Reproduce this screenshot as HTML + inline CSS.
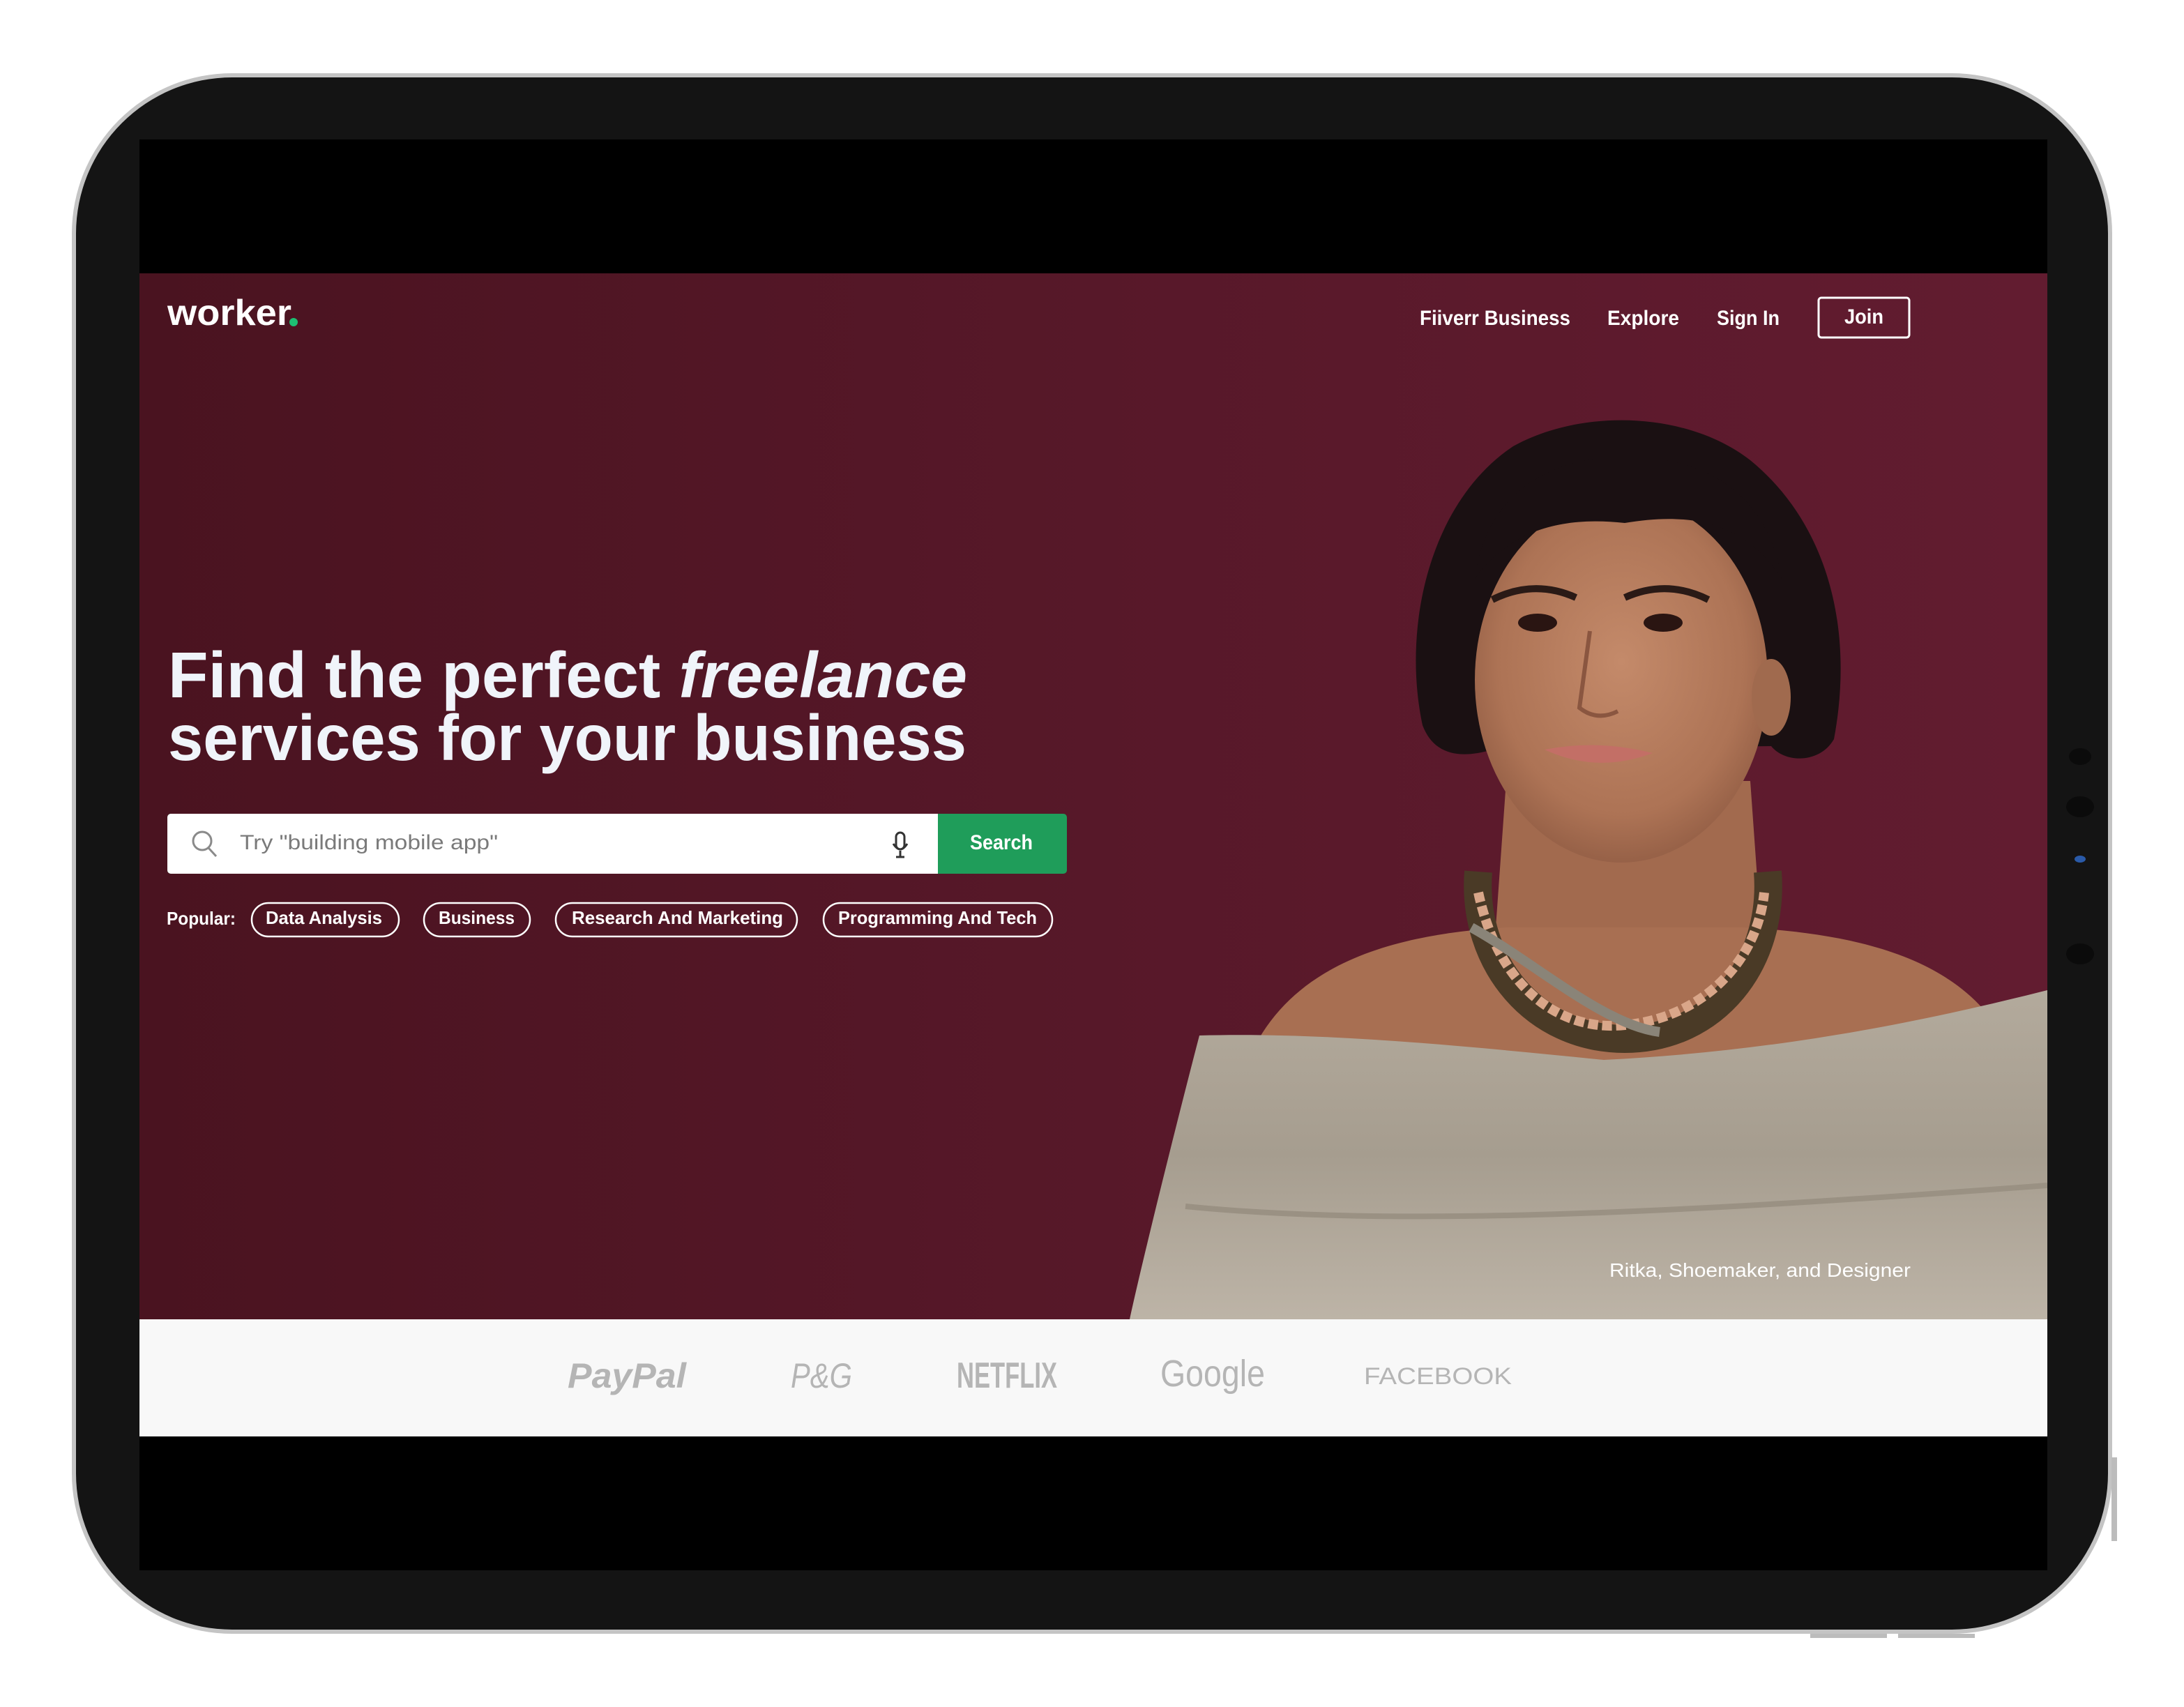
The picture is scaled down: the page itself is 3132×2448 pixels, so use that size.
<!DOCTYPE html>
<html><head><meta charset="utf-8"><style>
html,body{margin:0;padding:0;background:#fff;width:3132px;height:2448px;overflow:hidden}
svg{display:block}
text{font-family:"Liberation Sans",sans-serif}
</style></head><body>
<svg width="3132" height="2448" viewBox="0 0 3132 2448" xmlns="http://www.w3.org/2000/svg">
<defs>
<linearGradient id="hero" x1="0" x2="1" y1="0" y2="0">
<stop offset="0" stop-color="#4a1320"/><stop offset="0.5" stop-color="#571829"/><stop offset="1" stop-color="#621c30"/>
</linearGradient>
<radialGradient id="face" cx="0.5" cy="0.45" r="0.6">
<stop offset="0" stop-color="#c48a6a"/><stop offset="0.7" stop-color="#ad7355"/><stop offset="1" stop-color="#8e5a42"/>
</radialGradient>
<linearGradient id="blouse" x1="0" x2="0" y1="0" y2="1">
<stop offset="0" stop-color="#b3aa9c"/><stop offset="0.5" stop-color="#a69d8f"/><stop offset="1" stop-color="#bdb4a7"/>
</linearGradient>
<clipPath id="scr"><rect x="200" y="392" width="2736" height="1500"/></clipPath>
</defs>
<rect x="103" y="105" width="2926" height="2238" rx="230" fill="#c4c4c4"/>
<rect x="109" y="111" width="2914" height="2226" rx="224" fill="#141414"/>
<rect x="3028" y="2090" width="8" height="120" fill="#bcbcbc"/>
<rect x="2596" y="2343" width="110" height="6" fill="#bcbcbc"/>
<rect x="2722" y="2343" width="110" height="6" fill="#bcbcbc"/>
<ellipse cx="2983" cy="1085" rx="16" ry="12" fill="#0b0b0b"/>
<ellipse cx="2983" cy="1157" rx="20" ry="15" fill="#0b0b0b"/>
<ellipse cx="2983" cy="1232" rx="8" ry="5" fill="#2a5aa8"/>
<ellipse cx="2983" cy="1368" rx="20" ry="15" fill="#0b0b0b"/>
<rect x="200" y="200" width="2736" height="2052" fill="#000"/>
<rect x="200" y="392" width="2736" height="1500" fill="url(#hero)"/>
<g clip-path="url(#scr)">
 <path d="M2040 1040 C2010 900 2050 720 2170 640 C2270 585 2420 590 2510 660 C2620 750 2660 900 2630 1060 C2610 1095 2560 1095 2540 1070 L2140 1075 C2090 1090 2055 1080 2040 1040Z" fill="#1a1012"/>
 <path d="M2160 1120 L2510 1120 L2530 1400 L2140 1400Z" fill="#a26a4e"/>
 <path d="M1790 1520 C1850 1380 2000 1340 2160 1330 L2500 1330 C2680 1340 2820 1380 2880 1500 L2880 1560 L1790 1580Z" fill="#a86f52"/>
 <ellipse cx="2325" cy="975" rx="210" ry="262" fill="url(#face)"/>
 <ellipse cx="2540" cy="1000" rx="28" ry="55" fill="#a06a4e"/>
 <path d="M2115 830 C2130 710 2220 655 2330 655 C2450 655 2535 710 2555 830 C2500 745 2420 735 2330 750 C2240 740 2165 760 2115 830Z" fill="#1a1012"/>
 <path d="M2140 860 Q2200 830 2260 857" stroke="#2a1a16" stroke-width="10" fill="none"/>
 <path d="M2330 857 Q2390 830 2450 860" stroke="#2a1a16" stroke-width="10" fill="none"/>
 <ellipse cx="2205" cy="893" rx="28" ry="13" fill="#2a1512"/>
 <ellipse cx="2385" cy="893" rx="28" ry="13" fill="#2a1512"/>
 <path d="M2280 905 L2265 1015 Q2290 1035 2320 1020" stroke="#8a5640" stroke-width="6" fill="none"/>
 <path d="M2215 1075 Q2290 1060 2370 1080 Q2290 1110 2215 1075Z" fill="#c36f66"/>
 <path d="M2120 1250 C2110 1380 2200 1490 2330 1490 C2460 1490 2545 1380 2535 1250" stroke="#4a3a26" stroke-width="40" fill="none"/>
 <path d="M2120 1280 C2150 1420 2240 1480 2330 1470 C2440 1460 2520 1380 2530 1280" stroke="#d9a689" stroke-width="14" stroke-dasharray="14 6" fill="none"/>
 <path d="M2110 1330 C2200 1380 2300 1470 2380 1480" stroke="#8a8478" stroke-width="14" fill="none"/>
 <path d="M1720 1485 C1900 1480 2100 1500 2300 1520 C2500 1510 2700 1480 2936 1420 L2936 1892 L1620 1892 C1640 1800 1690 1600 1720 1485Z" fill="url(#blouse)"/>
 <path d="M1700 1730 C2000 1760 2400 1740 2936 1700" stroke="#9a9183" stroke-width="8" fill="none"/>
</g>
<text x="240" y="466" font-size="52" font-weight="bold" fill="#fff" textLength="178" lengthAdjust="spacingAndGlyphs">worker</text>
<circle cx="421" cy="462" r="6" fill="#1dbf73"/>
<g font-size="30" fill="#fff" font-weight="bold">
<text x="2036" y="466" textLength="216" lengthAdjust="spacingAndGlyphs">Fiiverr Business</text>
<text x="2305" y="466" textLength="103" lengthAdjust="spacingAndGlyphs">Explore</text>
<text x="2462" y="466" textLength="90" lengthAdjust="spacingAndGlyphs">Sign In</text>
<text x="2645" y="464" textLength="56" lengthAdjust="spacingAndGlyphs">Join</text>
</g>
<rect x="2608" y="427" width="130" height="57" rx="4" fill="none" stroke="#fff" stroke-width="3"/>
<g font-size="93" font-weight="bold" fill="#f0f4fa">
<text x="241" y="1000" textLength="1146" lengthAdjust="spacingAndGlyphs">Find the perfect <tspan font-style="italic">freelance</tspan></text>
<text x="241" y="1090" textLength="1145" lengthAdjust="spacingAndGlyphs">services for your business</text>
</g>
<rect x="240" y="1167" width="1290" height="86" rx="5" fill="#1f9d5a"/>
<path d="M245 1167 H1345 V1253 H245 a5 5 0 0 1 -5 -5 V1172 a5 5 0 0 1 5 -5Z" fill="#fff"/>
<circle cx="290" cy="1206" r="13" fill="none" stroke="#8a8a8a" stroke-width="3"/>
<line x1="299" y1="1216" x2="310" y2="1228" stroke="#8a8a8a" stroke-width="3"/>
<text x="344" y="1218" font-size="30" fill="#7a7a7a" textLength="370" lengthAdjust="spacingAndGlyphs">Try "building mobile app"</text>
<rect x="1285" y="1194" width="12" height="24" rx="6" fill="none" stroke="#333" stroke-width="3"/>
<path d="M1281 1210 q10 16 20 0 M1291 1220 v8 M1285 1229 h12" stroke="#333" stroke-width="3" fill="none"/>
<text x="1436" y="1218" font-size="30" font-weight="bold" fill="#fff" text-anchor="middle" textLength="90" lengthAdjust="spacingAndGlyphs">Search</text>
<g font-size="26" font-weight="bold" fill="#fff">
<text x="239" y="1326" textLength="99" lengthAdjust="spacingAndGlyphs">Popular:</text>
<text x="381" y="1325" textLength="167" lengthAdjust="spacingAndGlyphs">Data Analysis</text>
<text x="629" y="1325" textLength="109" lengthAdjust="spacingAndGlyphs">Business</text>
<text x="820" y="1325" textLength="303" lengthAdjust="spacingAndGlyphs">Research And Marketing</text>
<text x="1202" y="1325" textLength="285" lengthAdjust="spacingAndGlyphs">Programming And Tech</text>
</g>
<g fill="none" stroke="#fff" stroke-width="2.5">
<rect x="361" y="1295" width="211" height="48" rx="24"/>
<rect x="608" y="1295" width="152" height="48" rx="24"/>
<rect x="797" y="1295" width="346" height="48" rx="24"/>
<rect x="1181" y="1295" width="328" height="48" rx="24"/>
</g>
<text x="2308" y="1831" font-size="28" fill="#fff" textLength="432" lengthAdjust="spacingAndGlyphs">Ritka, Shoemaker, and Designer</text>
<rect x="200" y="1892" width="2736" height="168" fill="#f8f8f8"/>
<g fill="#b5b5b5" font-weight="bold">
<text x="814" y="1990" font-size="50" font-style="italic" textLength="170" lengthAdjust="spacingAndGlyphs">PayPal</text>
<text x="1134" y="1990" font-size="50" font-style="italic" font-family="Liberation Serif" font-weight="normal" textLength="88" lengthAdjust="spacingAndGlyphs">P&amp;G</text>
<text x="1372" y="1990" font-size="52" textLength="144" lengthAdjust="spacingAndGlyphs">NETFLIX</text>
<text x="1664" y="1988" font-size="54" font-weight="normal" textLength="150" lengthAdjust="spacingAndGlyphs">Google</text>
<text x="1956" y="1985" font-size="34" font-weight="normal" textLength="212" lengthAdjust="spacingAndGlyphs">FACEBOOK</text>
</g>
</svg>
</body></html>
